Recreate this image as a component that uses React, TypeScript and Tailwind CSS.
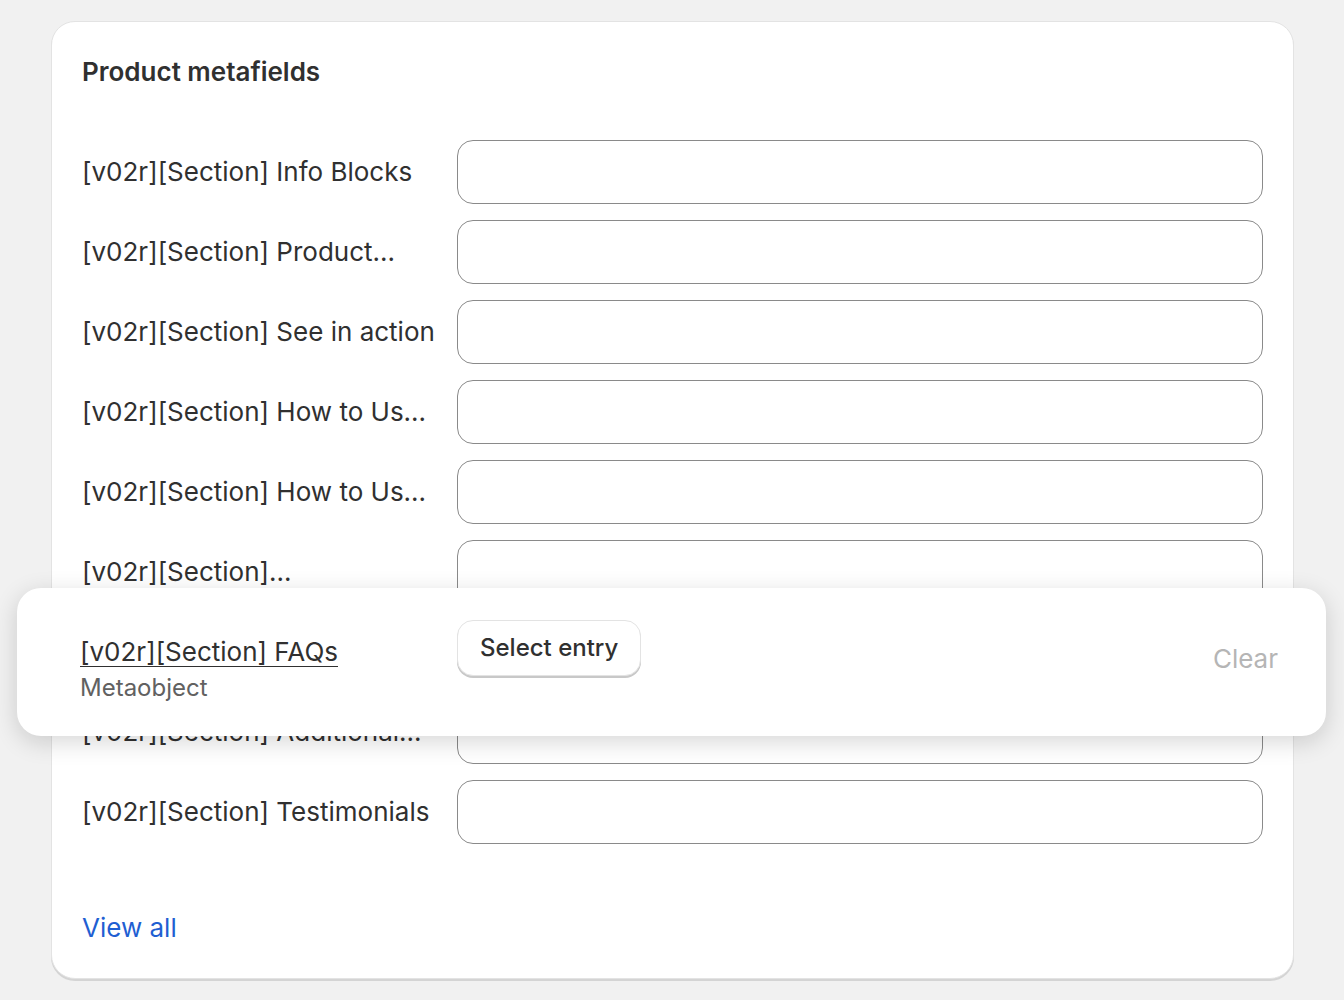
import React from "react";

const rows = [
  "[v02r][Section] Info Blocks",
  "[v02r][Section] Product...",
  "[v02r][Section] See in action",
  "[v02r][Section] How to Us...",
  "[v02r][Section] How to Us...",
  "[v02r][Section]...",
  "[v02r][Section] FAQs",
  "[v02r][Section] Additional...",
  "[v02r][Section] Testimonials",
];

export default function App() {
  return (
    <div
      className="min-h-screen bg-[#f1f1f1] pt-[21px] pb-[20px] text-[#303030]"
      style={{ fontFamily: "Inter, 'Noto Sans', sans-serif" }}
    >
      <div className="relative ml-[51px] w-[1243px] rounded-[24px] border border-[#e3e3e3] bg-white px-[30px] pt-[31px] pb-[31px] shadow-[0_2px_0_0_#d4d4d4]">
        <h2 className="h-[38px] text-[26px] font-semibold leading-[38px]">Product metafields</h2>

        <div className="mt-[49px] flex flex-col gap-4">
          {rows.map((label, i) => (
            <div key={i} className="grid grid-cols-[359px_1fr] items-center gap-4">
              <div className="whitespace-nowrap text-[26px] leading-[38px]">{label}</div>
              <div className="h-16 rounded-2xl border border-[#8a8a8a] bg-white" />
            </div>
          ))}
        </div>

        <div className="mt-[65px] h-[38px]">
          <a className="text-[26px] leading-[38px] text-[#1f5fd2]">View all</a>
        </div>

        {/* dragged row overlay */}
        <div className="absolute left-[-35px] top-[566px] flex h-[148px] w-[1309px] items-start rounded-[24px] bg-white pl-[63px] pr-[48px] pt-[32px] shadow-[0_6px_24px_rgba(0,0,0,0.16)]">
          <div className="w-[377px] pt-[13px]">
            <div className="text-[26px] leading-[38px] underline decoration-1 underline-offset-[5px]">
              [v02r][Section] FAQs
            </div>
            <div className="text-[24px] leading-[34px] text-[#616161]">Metaobject</div>
          </div>
          <button className="h-14 rounded-2xl border border-[#e3e3e3] bg-white px-[22px] text-[24px] font-medium text-[#303030] shadow-[0_2px_0_0_#c8c8c8]">
            Select entry
          </button>
          <div className="ml-auto pt-[20px] text-[26px] leading-[38px] text-[#b5b5b5]">Clear</div>
        </div>
      </div>
    </div>
  );
}
